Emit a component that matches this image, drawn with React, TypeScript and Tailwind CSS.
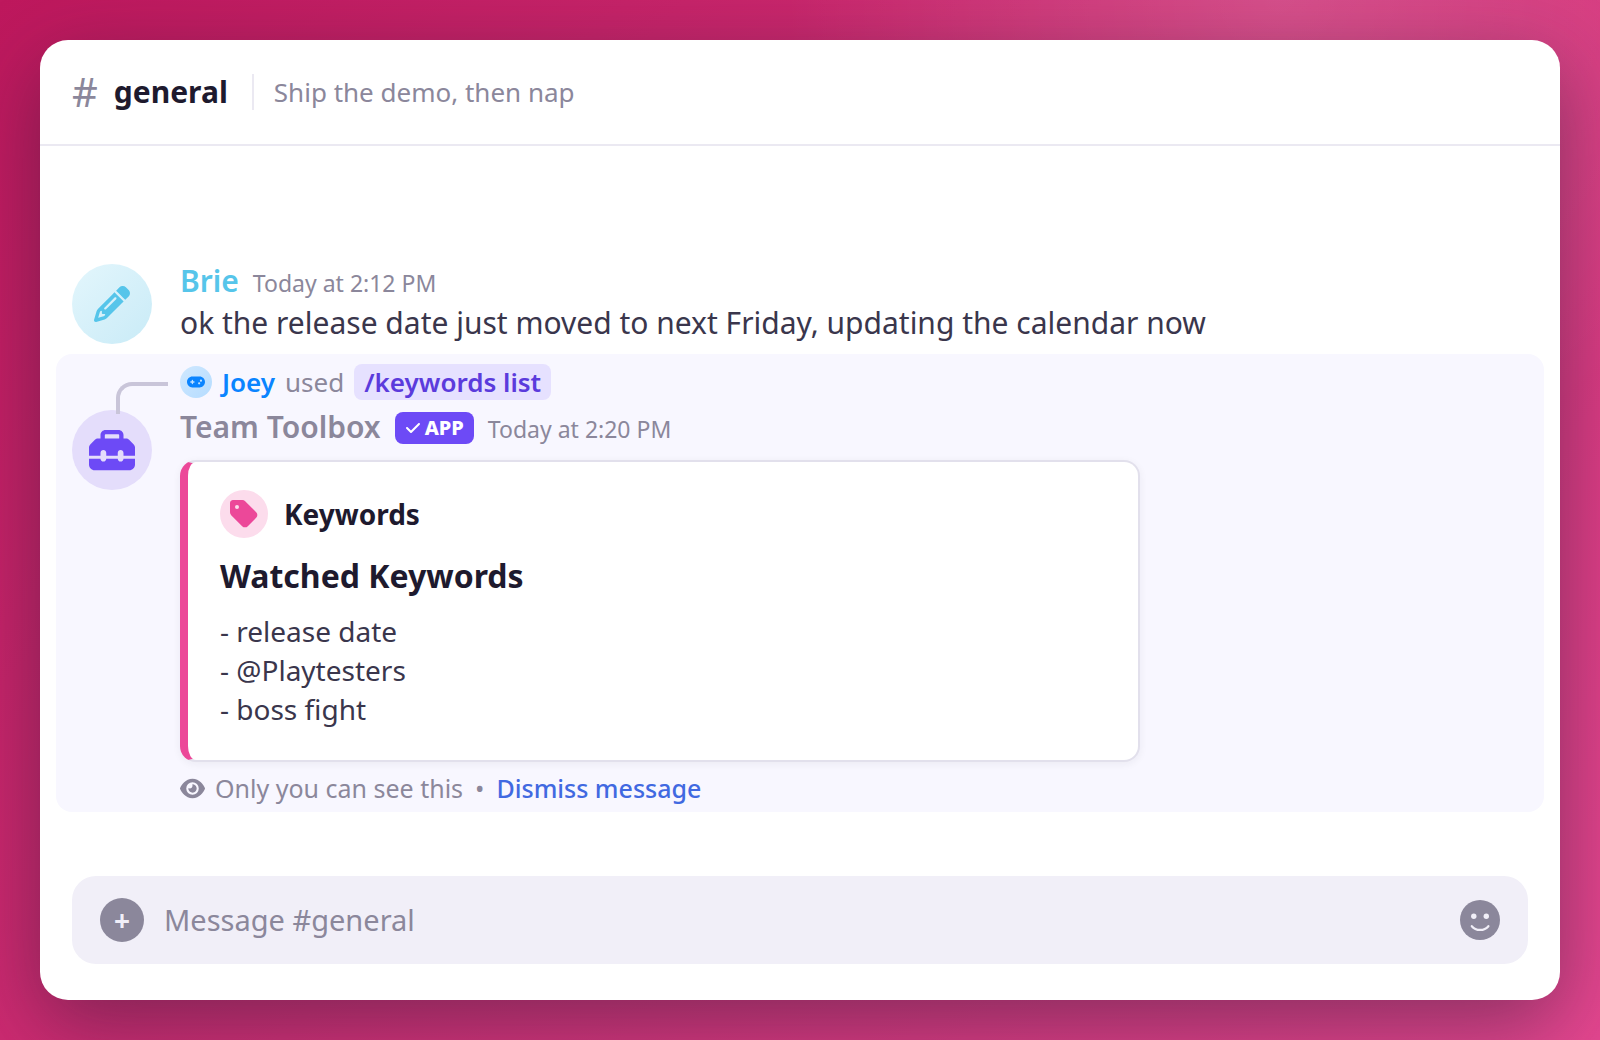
import React from "react";
import {
  FaCheck,
  FaEye,
  FaGamepad,
  FaPencil,
  FaTag,
  FaToolbox,
} from "react-icons/fa6";

const keywords = ["release date", "@Playtesters", "boss fight"];

const Header = () => (
  <header className="flex h-[106px] shrink-0 items-center border-b-2 border-[#ebe9f2] px-8">
    <span className="text-[40px] leading-none text-[#8b879b]">#</span>
    <h1 className="ml-4 text-[30px] leading-none font-bold text-[#1e1a2e]">
      general
    </h1>
    <div className="ml-6 h-9 w-0.5 bg-[#ebe9f2]" />
    <p className="ml-5 text-[26px] leading-9 text-[#8b879b]">
      Ship the demo, then nap
    </p>
  </header>
);

const Message = () => (
  <article className="flex gap-7 px-8 pb-2.5">
    <div className="flex size-20 shrink-0 items-center justify-center rounded-full bg-linear-135 from-[#e3f6fc] to-[#c9ebf7] text-[#56c5ea]">
      <FaPencil className="size-9" />
    </div>
    <div className="-mt-1">
      <div className="flex items-baseline gap-3.5">
        <span className="text-[30px] leading-[42px] font-semibold text-[#56c5ea]">
          Brie
        </span>
        <time className="text-[23px] leading-8 text-[#8b879b]">
          Today at 2:12 PM
        </time>
      </div>
      <p className="text-[30px] leading-[42px] text-[#3a364c]">
        ok the release date just moved to next Friday, updating the calendar now
      </p>
    </div>
  </article>
);

const KeywordsCard = () => (
  <section className="mt-4 w-full max-w-[960px] rounded-2xl border-2 border-l-8 border-[#e2e0ec] border-l-[#ec4899] bg-white px-8 pt-7 pb-[31px] shadow-[0_2px_8px_rgba(30,26,46,0.06)]">
    <div className="flex items-center gap-4">
      <div className="flex size-12 items-center justify-center rounded-full bg-[#fcdcec] text-[#ec4899]">
        <FaTag className="size-8" />
      </div>
      <span className="text-[28px] leading-[42px] font-bold text-[#1e1a2e]">
        Keywords
      </span>
    </div>
    <h2 className="mt-4 text-[32px] leading-11 font-bold text-[#1e1a2e]">
      Watched Keywords
    </h2>
    <ul className="mt-3.5 text-[28px] leading-[39px] text-[#3a364c]">
      {keywords.map((keyword) => (
        <li key={keyword}>- {keyword}</li>
      ))}
    </ul>
  </section>
);

const AppReply = () => (
  <article className="relative mx-4 rounded-2xl bg-[#f8f7ff] px-4 pt-2.5 pb-1">
    {/* line from the avatar up to the command */}
    <div className="absolute top-7 left-[60px] z-10 h-8 w-13 rounded-tl-2xl border-t-4 border-l-4 border-[#c9c5d9]" />
    <div className="flex items-center pl-27 text-[26px] leading-9">
      <div className="flex size-8 items-center justify-center rounded-full bg-linear-135 from-[#cfe8ff] to-[#b5dcff] text-[#0a84ff]">
        <FaGamepad className="size-[18px]" />
      </div>
      <span className="ml-2.5 font-semibold text-[#0a84ff]">Joey</span>
      <span className="ml-2.5 text-[#8b879b]">used</span>
      <span className="ml-2.5 rounded-lg bg-[#e6e1ff] px-2.5 font-semibold text-[#5b3bdc]">
        /keywords list
      </span>
    </div>
    <div className="mt-2.5 flex gap-7">
      <div className="flex size-20 shrink-0 items-center justify-center rounded-full bg-[#e4ddfb] text-[#6d4af6]">
        <FaToolbox className="size-[46px]" />
      </div>
      <div className="min-w-0 flex-1">
        <div className="flex h-9 items-baseline gap-3.5">
          <span className="text-[30px] leading-[34px] font-semibold text-[#8b879b]">
            Team Toolbox
          </span>
          <span className="flex h-8 items-center gap-1 self-center rounded-lg bg-[#6d4af6] px-2.5 text-xl font-extrabold text-white">
            <FaCheck className="size-4" />
            APP
          </span>
          <time className="text-[23px] leading-8 text-[#8b879b]">
            Today at 2:20 PM
          </time>
        </div>
        <div className="-mt-0.5">
          <KeywordsCard />
        </div>
        <div className="mt-1.5 flex items-center text-[25px] leading-10 text-[#8b879b]">
          <FaEye className="size-[25px]" />
          <span className="ml-2.5">Only you can see this</span>
          <span className="mx-3">•</span>
          <button type="button" className="font-medium text-[#4169e1]">
            Dismiss message
          </button>
        </div>
      </div>
    </div>
  </article>
);

const Composer = () => (
  <form
    className="mx-8 mt-16 mb-9 flex h-22 shrink-0 items-center rounded-3xl bg-[#f1eff8] px-7"
    onSubmit={(e) => e.preventDefault()}
  >
    <button
      type="button"
      aria-label="Add attachment"
      className="flex size-11 shrink-0 items-center justify-center rounded-full bg-[#8b879b] text-[28px] leading-none font-bold text-[#f1eff8]"
    >
      +
    </button>
    <input
      type="text"
      aria-label="Message #general"
      placeholder="Message #general"
      className="ml-5 min-w-0 flex-1 text-[29px] leading-10 text-[#3a364c] outline-none placeholder:text-[#8b879b]"
    />
    <button type="button" aria-label="Pick an emoji">
      <svg viewBox="0 0 40 40" className="size-10">
        <circle cx="20" cy="20" r="20" fill="#8b879b" />
        <circle cx="13.8" cy="16.3" r="2.7" fill="#f1eff8" />
        <circle cx="26.3" cy="16.3" r="2.7" fill="#f1eff8" />
        <path
          d="M11.8 26.2C15.8 31.2 24.4 31.2 28.4 26.2"
          fill="none"
          stroke="#f1eff8"
          strokeWidth="2.2"
          strokeLinecap="round"
        />
      </svg>
    </button>
  </form>
);

const App = () => (
  <div className="flex min-h-screen bg-[radial-gradient(circle_at_80%_0%,rgba(255,255,255,0.16),transparent_30%),linear-gradient(135deg,#be185d,#e4468f)] p-10 font-['Noto_Sans',sans-serif]">
    <main className="flex min-w-0 flex-1 flex-col rounded-[28px] bg-white shadow-[0_24px_80px_rgba(30,26,46,0.45)]">
      <Header />
      <div className="flex flex-1 flex-col justify-end">
        <Message />
        <AppReply />
      </div>
      <Composer />
    </main>
  </div>
);

export default App;
